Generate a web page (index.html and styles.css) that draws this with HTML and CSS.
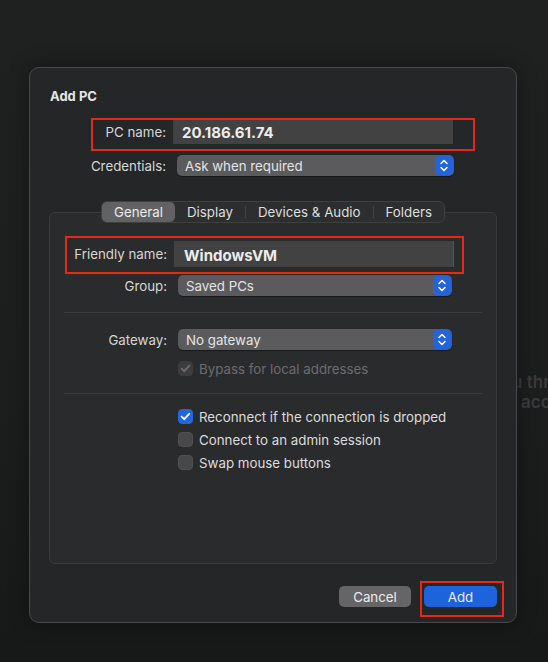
FILE: index.html
```html
<!DOCTYPE html>
<html>
<head>
<meta charset="utf-8">
<link rel="stylesheet" href="styles.css">
</head>
<body>
<div class="backdrop-text">
  <p class="l1">u through your workspace</p>
  <p class="l2">account</p>
</div>
<div class="dialog">
  <div class="title">Add PC</div>
  <div class="form top">
    <label class="lbl">PC name:</label>
    <div class="field">20.186.61.74</div>
    <label class="lbl">Credentials:</label>
    <div class="select wide"><span>Ask when required</span><span class="stepper"><svg width="18" height="19" viewBox="0 0 18 19"><path d="M6 7.5L9 4.5L12 7.5M6 11.5L9 14.5L12 11.5" fill="none" stroke="#fff" stroke-width="1.5" stroke-linecap="round" stroke-linejoin="round"/></svg></span></div>
  </div>

  <div class="tabs">
    <span class="tab active">General</span>
    <span class="tab">Display</span>
    <span class="sep"></span>
    <span class="tab">Devices &amp; Audio</span>
    <span class="sep"></span>
    <span class="tab">Folders</span>
  </div>
  <div class="tabbox">
    <div class="form">
      <label class="lbl">Friendly name:</label>
      <div class="field tall">WindowsVM</div>
      <label class="lbl">Group:</label>
      <div class="select"><span>Saved PCs</span><span class="stepper"><svg width="18" height="19" viewBox="0 0 18 19"><path d="M6 7.5L9 4.5L12 7.5M6 11.5L9 14.5L12 11.5" fill="none" stroke="#fff" stroke-width="1.5" stroke-linecap="round" stroke-linejoin="round"/></svg></span></div>
    </div>
    <div class="divider"></div>
    <div class="form gw">
      <label class="lbl">Gateway:</label>
      <div class="select"><span>No gateway</span><span class="stepper"><svg width="18" height="19" viewBox="0 0 18 19"><path d="M6 7.5L9 4.5L12 7.5M6 11.5L9 14.5L12 11.5" fill="none" stroke="#fff" stroke-width="1.5" stroke-linecap="round" stroke-linejoin="round"/></svg></span></div>
      <span></span>
      <div class="check disabled"><span class="box"><svg width="15" height="15" viewBox="0 0 15 15"><path d="M3.6 7.6L6.2 10.2L11.4 4.6" fill="none" stroke="#6e6e70" stroke-width="1.8" stroke-linecap="round" stroke-linejoin="round"/></svg></span>Bypass for local addresses</div>
    </div>
    <div class="divider second"></div>
    <div class="checks">
      <div class="check"><span class="box on"><svg width="15" height="15" viewBox="0 0 15 15"><path d="M3.6 7.6L6.2 10.2L11.4 4.6" fill="none" stroke="#fff" stroke-width="1.8" stroke-linecap="round" stroke-linejoin="round"/></svg></span>Reconnect if the connection is dropped</div>
      <div class="check"><span class="box"></span>Connect to an admin session</div>
      <div class="check"><span class="box"></span>Swap mouse buttons</div>
    </div>
  </div>
  <div class="buttons">
    <button class="btn cancel">Cancel</button>
    <button class="btn add">Add</button>
  </div>

  <div class="mark mark-pc"></div>
  <div class="mark mark-friendly"></div>
  <div class="mark mark-add"></div>
</div>
</body>
</html>
```
FILE: styles.css
```css
html, body {
  margin: 0;
  padding: 0;
}
body {
  width: 548px;
  height: 662px;
  overflow: hidden;
  position: relative;
  background: linear-gradient(#1f2020, #1c1d1d 60%, #171818);
  font-family: Inter, "Noto Sans", sans-serif;
  font-size: 13.3px;
  color: #dcdcdc;
  padding: 67px 0 0 29px;
  box-sizing: border-box;
}
.backdrop-text {
  position: absolute;
  left: 0;
  top: 372px;
  width: 548px;
  overflow: hidden;
  color: #3a3b3c;
  font-size: 17px;
  font-weight: 600;
  line-height: 20px;
}
.backdrop-text p { margin: 0; white-space: nowrap; }
.backdrop-text .l1 { padding-left: 512px; }
.backdrop-text .l2 { padding-left: 521px; }
.dialog {
  position: relative;
  z-index: 1;
  width: 488px;
  height: 556px;
  box-sizing: border-box;
  background: #252628;
  border: 1px solid #48494b;
  border-radius: 10px;
  padding: 20px 19px 15px 19px;
  display: flex;
  flex-direction: column;
  box-shadow: 0 0 20px rgba(0,0,0,0.35);
}
.title {
  font-weight: 700;
  font-size: 13px;
  line-height: 16px;
  padding-left: 1px;
  color: #e6e6e6;
}
.form {
  display: grid;
  grid-template-columns: 103px 1fr;
  column-gap: 7px;
  align-items: center;
}
.form.top {
  margin: 16px 0 0 14px;
  row-gap: 11px;
}
.lbl {
  text-align: right;
  color: #d6d6d6;
  white-space: nowrap;
}
.field {
  width: 280px;
  height: 24px;
  box-sizing: border-box;
  background: #424243;
  padding: 0 9px;
  display: flex;
  align-items: center;
  font-weight: 700;
  font-size: 15px;
  color: #ececec;
}
.field.tall {
  height: 26px;
  padding-left: 10px;
  padding-top: 2px;
  border-right: 1px solid #2f5a8a;
}
.select {
  margin-left: 4px;
  width: 274px;
  height: 21px;
  box-sizing: border-box;
  background: #5b5b5d;
  border-radius: 5px;
  padding: 0 1px 0 8px;
  display: flex;
  align-items: center;
  justify-content: space-between;
  color: #e4e4e4;
  box-shadow: 0 0.5px 1px rgba(0,0,0,0.4);
}
.select.wide { width: 277px; }
.stepper {
  width: 18px;
  height: 19px;
  background: #2463d9;
  border-radius: 4px;
  display: flex;
}
.tabs {
  align-self: center;
  margin: 25px 0 -11px;
  position: relative;
  z-index: 1;
  height: 22px;
  box-sizing: border-box;
  display: flex;
  align-items: center;
  background: #2d2e30;
  border: 1px solid #3e3f41;
  border-radius: 6px;
  padding: 0;
}
.tab {
  height: 20px;
  line-height: 20px;
  padding: 0 12px;
  color: #dedede;
  border-radius: 5px;
}
.tab.active {
  background: #626264;
  color: #ececec;
}
.sep {
  width: 1px;
  height: 12px;
  background: #444547;
}
.tabbox {
  height: 354px;
  box-sizing: border-box;
  background: #2a2b2d;
  border: 1px solid #3a3b3d;
  border-radius: 6px;
  padding: 28px 14px 0 14px;
}
.tabbox .form { row-gap: 8px; }
.tabbox .form.gw { row-gap: 11px; }
.divider {
  height: 1px;
  background: #3a3b3d;
  margin: 16px 0 16px;
}
.divider.second { margin: 17px 0 15px; }
.check {
  display: flex;
  align-items: center;
  gap: 6px;
  height: 15px;
  margin-left: 4px;
  color: #dcdcdc;
  white-space: nowrap;
}
.check.disabled { color: #6c6c6e; }
.box {
  width: 15px;
  height: 15px;
  box-sizing: border-box;
  border-radius: 4px;
  background: #48484a;
  border: 1px solid #505052;
  display: flex;
  flex-shrink: 0;
}
.box svg { margin: -1px; }
.check.disabled .box {
  background: #3c3c3e;
  border-color: #3c3c3e;
}
.box.on {
  background: #2266de;
  border-color: #2266de;
}
.checks {
  display: flex;
  flex-direction: column;
  gap: 8px;
  padding-left: 110px;
}
.buttons {
  margin-top: 22px;
  display: flex;
  justify-content: flex-end;
  gap: 13px;
}
.btn {
  height: 21px;
  border: none;
  border-radius: 5px;
  font-family: inherit;
  font-size: 13.3px;
  color: #ececec;
  padding: 0;
}
.btn.cancel {
  width: 72px;
  background: #656567;
}
.btn.add {
  width: 73px;
  background: #1d64dc;
}
.mark {
  position: absolute;
  border: 2px solid #e62814;
  box-sizing: border-box;
}
.mark-pc { left: 61px; top: 50px; width: 384px; height: 33px; }
.mark-friendly { left: 35px; top: 168px; width: 399px; height: 38px; }
.mark-add { left: 390px; top: 513px; width: 84px; height: 36px; }
```
